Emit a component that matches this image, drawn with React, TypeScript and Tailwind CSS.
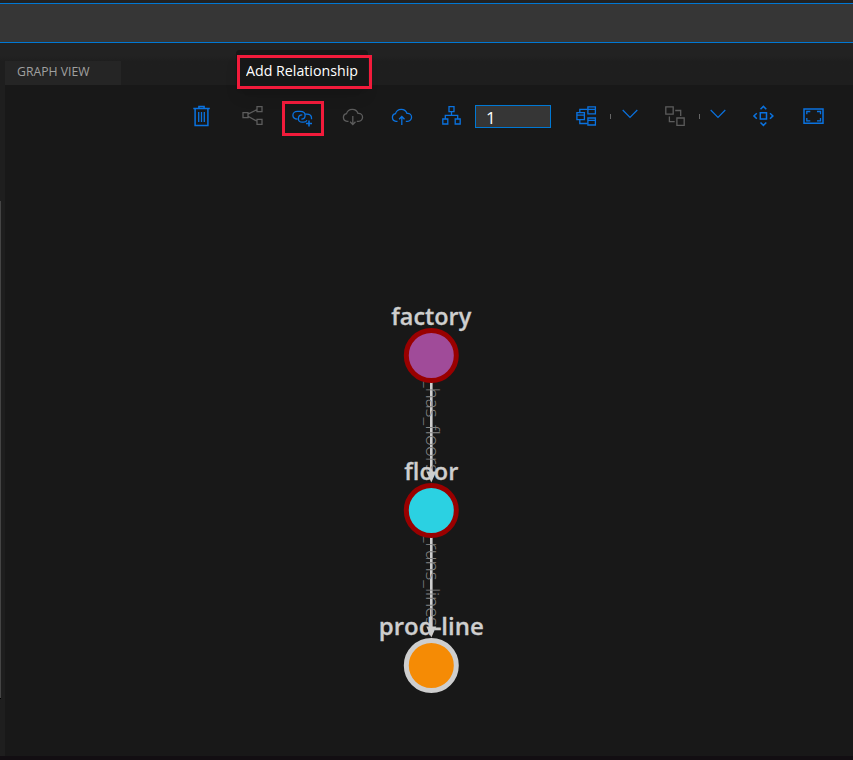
import type { ReactNode } from "react";

const BLUE = "#0a72df";
const GRAY = "#5c5c5c";

function Icon({ color = BLUE, className = "", children }: { color?: string; className?: string; children: ReactNode }) {
  return (
    <svg width="24" height="24" viewBox="0 0 24 24" fill="none" stroke={color} strokeWidth="1.3" className={`shrink-0 ${className}`}>
      {children}
    </svg>
  );
}

const cloud = "M7.5 17.3H6a3.9 3.9 0 0 1-.5-7.7A6.1 6.1 0 0 1 17 9.4h.6a3.95 3.95 0 0 1 0 7.9H15.8";

function Chevron({ className = "" }: { className?: string }) {
  return (
    <svg width="16" height="10" viewBox="0 0 16 10" fill="none" stroke={BLUE} strokeWidth="1.2" className={`mb-1 shrink-0 ${className}`}>
      <path d="M.7 1 8 8.3 15.3 1" />
    </svg>
  );
}

function Toolbar() {
  return (
    <div className="flex h-[62px] items-center pl-[185px]">
      <Icon>
        <path d="M3.3 4.6h16.5M8.9 4V2.5h5.2V4M5.1 5v16.4h12.8V5" strokeWidth="1.5" />
        <path d="M8.7 8v10M11.5 8v10M14.3 8v10" />
      </Icon>
      <Icon color={GRAY} className="ml-[26px]">
        <path d="M3 8.7h5v5H3zM17 2.6h5v5h-5zM17 15.3h5v5h-5zM8 10.2l9-4.6M8 12.2l9 5" />
      </Icon>
      <div className="mt-[5px] ml-[18px] flex h-[35px] w-[42px] shrink-0 items-center border-[3px] border-[#f21b3b] pl-[5px]">
        <Icon className="mb-1">
          <path d="M7.6 14.2C4.7 14 2.9 12.6 2.9 10.2c0-2.3 1.9-3.8 4.5-3.8h2.8c2.9 0 4.9 1.5 4.9 3.9 0 2.3-1.6 3.9-3.7 3.9" />
          <path d="M13.8 17.2h-1.6c-2.3 0-3.8-1.4-3.8-3.5 0-2.2 1.6-3.8 3.9-3.8M15.2 9.1h1.6c3 0 4.7 1.7 4.7 4v1.2M13.4 17.2c1.7 0 3-.7 3.6-1.9" />
          <path d="M19 15.5v6M16 18.5h6" strokeWidth="1.6" />
        </Icon>
      </div>
      <Icon color={GRAY} className="ml-[16.5px]">
        <path d={cloud} />
        <path d="M11.8 12v8.5M9.1 17.8l2.7 2.7 2.7-2.7" />
      </Icon>
      <Icon className="ml-[25.5px]">
        <path d={cloud} />
        <path d="M11.8 21v-8.5M9.1 15.2l2.7-2.7 2.7 2.7" />
      </Icon>
      <Icon className="ml-[26px]">
        <path d="M9 2.6h5v5H9zM2.8 15h5v5h-5zM15.2 15h5v5h-5zM11.5 7.6v3.8M5.3 15v-3.6h12.4V15" />
      </Icon>
      <input
        aria-label="Expansion level"
        defaultValue="1"
        className="ml-[11px] h-[23px] w-[76px] shrink-0 rounded-none border border-[#0078d4] bg-[#363636] pt-0.5 pl-[10px] font-['Open_Sans','Noto_Sans',sans-serif] text-[17px] leading-5 text-white outline-none"
      />
      <Icon className="ml-[23px]">
        <path d="M2.9 8.7h7.5v7h-7.5zM13.9 2.8h7.5v7h-7.5zM13.9 14h7.5v7h-7.5z" />
        <path d="M2.9 11.2h7.5M13.9 5.3h7.5M13.9 16.4h7.5M5.8 8.5V5.3h7.8M5.8 16v3.5h7.8" />
      </Icon>
      <span className="ml-[12px] h-[5px] w-px bg-[#666]" />
      <Chevron className="ml-[11px]" />
      <Icon color={GRAY} className="ml-[24px]">
        <path d="M3.8 2.8h7.4v7.4H3.8zM14.9 14h7.3v7.3h-7.3zM13.2 6.5h5.5v5.5M7.4 12.5v5.2h5.3" />
      </Icon>
      <span className="ml-[13px] h-[5px] w-px bg-[#666]" />
      <Chevron className="ml-[10px]" />
      <Icon className="ml-[26px]">
        <path d="M8.3 8.8h6.2v6.2H8.3zM8.5 5.3l2.9-2.9 2.9 2.9M8.5 18.5l2.9 2.9 2.9-2.9M4.8 9.2l-2.9 2.7 2.9 2.9M18 9.2l2.9 2.7-2.9 2.9" strokeWidth="1.5" />
      </Icon>
      <Icon className="ml-[25px]">
        <path d="M3 4.9h19v14.3H3z" strokeWidth="1.5" />
        <path d="M5.8 10.2V7.5h3.5M16 7.5h3.5v2.7M5.8 14v2.8h3.5M16 16.8h3.5V14" />
      </Icon>
    </div>
  );
}

const nodes = [
  { name: "factory", y: 208.5, width: 80, fill: "#a04b99", ring: "#990000" },
  { name: "floor", y: 363.5, width: 54, fill: "#2bd1e2", ring: "#990000" },
  { name: "prod-line", y: 518.5, width: 105, fill: "#f58b05", ring: "#cecece" },
];

const edges = [
  { label: "_has_floors", y: 233, length: 93 },
  { label: "_runs_lines", y: 388, length: 91 },
];

function TwinGraph() {
  return (
    <svg width="848" height="609" viewBox="0 0 848 609" className="block font-['Open_Sans','Noto_Sans',sans-serif]">
      {edges.map((e) => (
        <g key={e.label}>
          <path d={`M426.3 ${e.y}v96`} stroke="#cecece" strokeWidth="2.6" />
          <path d={`M421.3 ${e.y + 91.5}h10l-5 11z`} fill="#cecece" />
          <text transform={`translate(420.8 ${e.y}) rotate(90)`} textLength={e.length} lengthAdjust="spacingAndGlyphs" fontSize="18" fontWeight="300" fill="#858585">
            {e.label}
          </text>
        </g>
      ))}
      {nodes.map((n) => (
        <g key={n.name}>
          <circle cx="426.3" cy={n.y} r="25" fill={n.fill} stroke={n.ring} strokeWidth="5" />
          <text x="426.3" y={n.y - 31} textAnchor="middle" textLength={n.width} lengthAdjust="spacingAndGlyphs" fontSize="23.5" fontWeight="600" fill="#cecece" stroke="#cecece" strokeWidth="0.3">
            {n.name}
          </text>
        </g>
      ))}
    </svg>
  );
}

export default function App() {
  return (
    <div className="flex h-[760px] w-[853px] flex-col overflow-hidden bg-[#1e1e1e] font-['Open_Sans','Noto_Sans',sans-serif]">
      <div className="h-[3px] shrink-0 bg-[#222]" />
      <div className="h-10 shrink-0 border-y border-[#0078d4] bg-[#363636]" />
      <div className="relative flex h-[42px] shrink-0 items-end bg-linear-to-b from-[#222] from-30% to-[#1e1e1e] to-45% pl-[5px]">
        <div className="h-6 w-[116px] bg-[#252525] pl-3 text-[12px] leading-[22px] text-[#a0a0a0]">
          <span className="inline-block origin-left scale-x-[1.02] whitespace-nowrap">GRAPH VIEW</span>
        </div>
        <div className="absolute top-[7px] left-[236px] z-10 h-[39px] w-[132px] rounded-sm bg-[#171717] shadow-lg" />
        <div className="absolute top-3 left-[237px] z-20 h-[34px] w-[135px] border-[3px] border-[#f21b3b] pl-[6px] text-[14.5px] leading-[26px] whitespace-nowrap text-white">
          <span className="inline-block origin-left scale-x-[.98]">Add Relationship</span>
        </div>
      </div>
      <div className="flex min-h-0 flex-1">
        <div className="flex w-[5px] shrink-0 flex-col pt-[116px]">
          <div className="h-[498px] w-px border-b border-black bg-[#444]" />
        </div>
        <main className="flex-1 overflow-hidden bg-[#181818]">
          <Toolbar />
          <TwinGraph />
        </main>
      </div>
      <div className="h-1 shrink-0 bg-[#120e12]" />
    </div>
  );
}
